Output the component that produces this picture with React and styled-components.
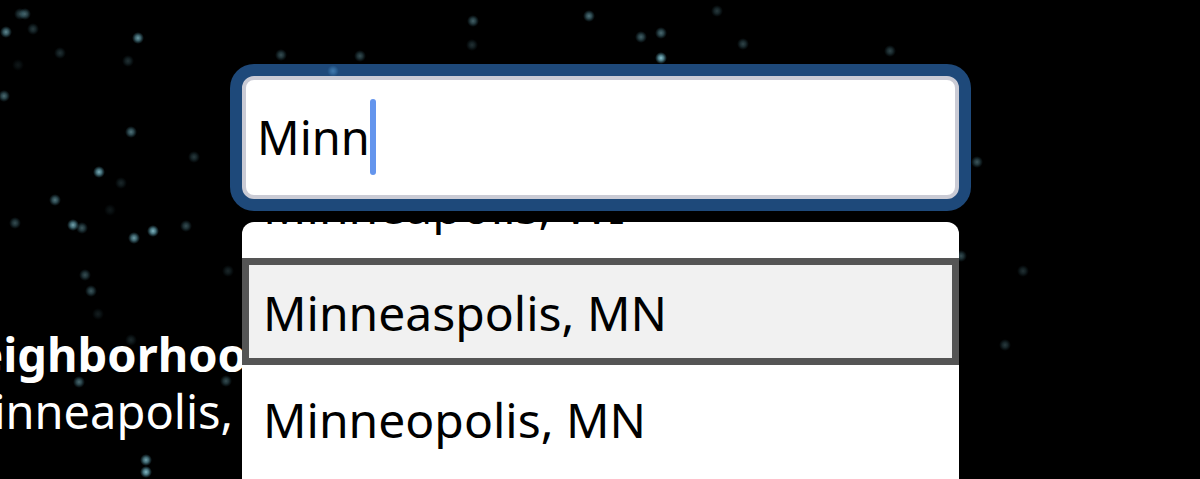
import { useLayoutEffect, useRef, useState } from 'react';
import styled, { createGlobalStyle } from 'styled-components';

const CITIES = ['Minneapolis, WI', 'Minneaspolis, MN', 'Minneopolis, MN'];

// how much of the previous option stays visible above the active one
const PEEK = 36;

// x, y, brightness
const STARS = [
  [20, 14, 0.35], [25, 14, 0.5], [6, 32, 0.7], [33, 29, 0.3], [138, 38, 0.8],
  [60, 53, 0.25], [18, 65, 0.12], [128, 61, 0.25], [4, 96, 0.55], [131, 132, 0.6],
  [194, 157, 0.3], [99, 172, 0.9], [121, 183, 0.2], [55, 200, 0.6], [15, 223, 0.4],
  [73, 225, 0.85], [82, 228, 0.45], [110, 210, 0.12], [153, 231, 0.95], [186, 226, 0.4],
  [134, 238, 0.8], [85, 275, 0.4], [91, 291, 0.45], [98, 314, 0.15], [131, 340, 0.2],
  [79, 382, 0.55], [226, 381, 0.4], [228, 271, 0.2], [146, 460, 0.85], [146, 472, 0.95],
  [281, 55, 0.4], [360, 56, 0.4], [333, 71, 1], [473, 21, 0.5], [472, 45, 0.25],
  [589, 16, 0.6], [641, 37, 0.5], [661, 33, 0.55], [661, 58, 1], [717, 11, 0.3],
  [743, 44, 0.35], [890, 51, 0.35], [977, 162, 0.45], [961, 256, 0.4], [1023, 271, 0.25],
  [1005, 345, 0.3],
];

const Starfield = () => (
  <Sky viewBox="0 0 1200 479" preserveAspectRatio="xMidYMid slice" aria-hidden="true">
    <defs>
      <radialGradient id="star">
        <stop offset="0%" stopColor="#8cc4d0" />
        <stop offset="45%" stopColor="#5f98a6" stopOpacity="0.8" />
        <stop offset="100%" stopColor="#3d7888" stopOpacity="0" />
      </radialGradient>
    </defs>
    {STARS.map(([x, y, light]) => (
      <circle key={`${x}-${y}`} cx={x} cy={y} r="6" fill="url(#star)" opacity={light} />
    ))}
  </Sky>
);

const App = () => {
  const [query, setQuery] = useState('Minn');
  const [active, setActive] = useState(1);
  const listRef = useRef(null);

  useLayoutEffect(() => {
    const list = listRef.current;
    const option = list.children[active];
    list.scrollTop = option.offsetTop - PEEK;
  }, [active]);

  return (
    <Page>
      <GlobalStyle />
      <Starfield />
      <Place>
        <PlaceTitle>Neighborhoo</PlaceTitle>
        <PlaceCity>Minneapolis,</PlaceCity>
      </Place>
      <Search>
        <Field>
          <Input
            type="text"
            role="combobox"
            aria-label="City"
            aria-expanded="true"
            aria-controls="cities"
            aria-activedescendant={`city-${active}`}
            autoComplete="off"
            spellCheck="false"
            value={query}
            onChange={e => setQuery(e.target.value)}
          />
          <Caret />
        </Field>
        <Options id="cities" role="listbox" aria-label="Cities" ref={listRef}>
          {CITIES.map((city, index) => (
            <Option
              key={city}
              id={`city-${index}`}
              role="option"
              aria-selected={index === active}
              $active={index === active}
              onClick={() => setActive(index)}
            >
              {city}
            </Option>
          ))}
        </Options>
      </Search>
    </Page>
  );
};

// ── Styled Components ──────────────────────────────────────────

const GlobalStyle = createGlobalStyle`
  * { box-sizing: border-box; }

  body {
    margin: 0;
    background: #000;
    font-family: "Noto Sans", "Open Sans", sans-serif;
    font-size: 47px;
  }
`;

const Page = styled.main`
  position: relative;
  display: flex;
  flex-direction: column;
  height: 100vh;
  overflow: hidden;
  padding: 76px 241px 0 242px;
`;

const Sky = styled.svg`
  position: absolute;
  inset: 0;
  width: 100%;
  height: 100%;
`;

/* Card text that the open list covers */
const Place = styled.section`
  position: absolute;
  left: -63px;
  bottom: 39px;
  color: #fff;
  line-height: 57px;
  text-align: center;
  white-space: nowrap;
`;

const PlaceTitle = styled.h2`
  margin: 0;
  font-size: inherit;
  font-weight: 700;
`;

const PlaceCity = styled.p`
  margin: 0;
`;

const Search = styled.div`
  position: relative;
  display: flex;
  flex-direction: column;
  flex: 1;
  min-height: 0;
  gap: 23px;
`;

const Field = styled.label`
  display: flex;
  align-items: center;
  height: 123px;
  flex-shrink: 0;
  padding: 0 11px 2px;
  border: 4px solid #cacbd5;
  border-radius: 12px;
  background: #fff;
  box-shadow: 0 0 0 12px rgba(40, 97, 163, 0.75);
  cursor: text;
`;

const Input = styled.input`
  field-sizing: content;
  min-width: 1px;
  max-width: 100%;
  padding: 0;
  border: 0;
  outline: 0;
  background: transparent;
  color: #000;
  font: inherit;
  caret-color: transparent;
`;

const Caret = styled.span`
  width: 6px;
  height: 76px;
  border-radius: 3px;
  background: #6495ed;
`;

const Options = styled.ul`
  position: relative;
  flex: 1;
  min-height: 0;
  margin: 0;
  padding: 0 0 16px;
  overflow-y: auto;
  scrollbar-width: none;
  list-style: none;
  border-radius: 12px 12px 0 0;
  background: #fff;
`;

const Option = styled.li`
  padding: 13px 14px 11px;
  border: 7px solid ${props => (props.$active ? '#555' : 'transparent')};
  background: ${props => (props.$active ? '#f1f1f1' : '#fff')};
  color: #000;
  font-size: 48px;
  line-height: 69px;
  cursor: pointer;
`;

export default App;
